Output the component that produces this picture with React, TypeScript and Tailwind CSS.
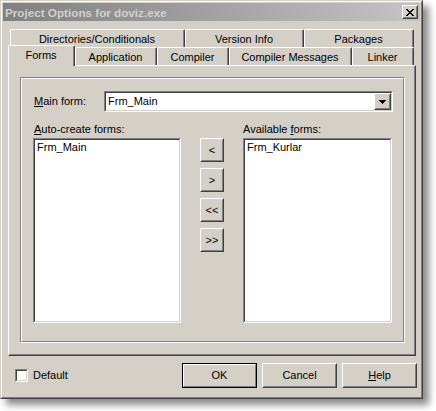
import type { ReactNode } from 'react';

const font = "font-['Liberation_Sans',Arial,sans-serif]";

function Raised({ children, className = '' }: { children?: ReactNode; className?: string }) {
  return (
    <div className={`border border-t-white border-l-white border-r-[#404040] border-b-[#404040] bg-[#d4d0c8] ${className}`}>
      <div className="h-full w-full border border-t-[#d4d0c8] border-l-[#d4d0c8] border-r-[#808080] border-b-[#808080] flex items-center justify-center">
        {children}
      </div>
    </div>
  );
}

function Sunken({ children, className = '' }: { children?: ReactNode; className?: string }) {
  return (
    <div className={`border border-t-[#808080] border-l-[#808080] border-r-white border-b-white ${className}`}>
      <div className="h-full w-full border border-t-[#404040] border-l-[#404040] border-r-[#d4d0c8] border-b-[#d4d0c8] bg-white">
        {children}
      </div>
    </div>
  );
}

function Tab({ label, w, selected = false }: { label: string; w: string; selected?: boolean }) {
  if (selected) {
    return (
      <div className={`${w} h-[21px] -mb-px relative z-10 bg-[#d4d0c8] border-t border-l border-t-white border-l-white border-r border-r-[#404040] rounded-t-[2px]`}>
        <div className="h-full border-r border-r-[#808080] flex items-center justify-center pb-px">{label}</div>
      </div>
    );
  }
  return (
    <div className={`${w} h-[18px] bg-[#d4d0c8] border-t border-l border-t-white border-l-white border-r border-r-[#404040] rounded-t-[2px]`}>
      <div className="h-full border-r border-r-[#808080] flex items-center justify-center pt-px">{label}</div>
    </div>
  );
}

function CloseGlyph() {
  const rows = ['11000011', '01100110', '00111100', '00011000', '00111100', '01100110', '11000011'];
  return (
    <svg width="8" height="7" viewBox="0 0 8 7" shapeRendering="crispEdges">
      {rows.flatMap((r, y) =>
        r.split('').map((c, x) => (c === '1' ? <rect key={`${x}-${y}`} x={x} y={y} width="1" height="1" fill="#000" /> : null))
      )}
    </svg>
  );
}

export default function App() {
  return (
    <div className={`w-[436px] h-[411px] bg-white text-[11px] leading-[13px] text-black ${font}`}>
      <div className="w-[423px] h-[399px] bg-[#d4d0c8] border border-t-[#d4d0c8] border-l-[#d4d0c8] border-r-[#404040] border-b-[#404040] shadow-[6px_6px_7px_rgba(0,0,0,0.45)]">
        <div className="h-full border border-t-white border-l-white border-r-[#808080] border-b-[#808080] p-px flex flex-col">
          {/* title bar */}
          <div className="h-[18px] flex items-center justify-between bg-gradient-to-r from-[#808080] to-[#c4c4c4] pl-[2px] pr-[2px]">
            <span className="font-bold text-[11.7px] text-[#d4d0c8]">Project Options for doviz.exe</span>
            <Raised className="w-[16px] h-[14px]">
              <CloseGlyph />
            </Raised>
          </div>

          {/* tabs */}
          <div className="mt-[8px] pl-[5px] flex flex-col">
            <div className="flex pl-[2px] h-[18px]">
              <Tab label="Directories/Conditionals" w="w-[175px]" />
              <Tab label="Version Info" w="w-[119px]" />
              <Tab label="Packages" w="w-[110px]" />
            </div>
            <div className="flex items-end h-[18px]">
              <Tab label="Forms" w="w-[67px]" selected />
              <Tab label="Application" w="w-[82px]" />
              <Tab label="Compiler" w="w-[72px]" />
              <Tab label="Compiler Messages" w="w-[123px]" />
              <Tab label="Linker" w="w-[62px]" />
            </div>

            {/* panel */}
            <div className="w-[408px] h-[291px] border-t border-l border-t-white border-l-white border-r border-b border-r-[#404040] border-b-[#404040]">
              <div className="h-full border-r border-b border-r-[#808080] border-b-[#808080] pt-[11px] pl-[11px]">
                {/* group box */}
                <div className="w-[385px] h-[266px] border border-t-[#808080] border-l-[#808080] border-r-white border-b-white">
                  <div className="h-full border border-t-white border-l-white border-r-[#808080] border-b-[#808080] flex flex-col">
                    <div className="mt-[12px] flex items-center pl-[12px]">
                      <span className="w-[70px]">
                        <span className="underline">M</span>ain form:
                      </span>
                      <Sunken className="w-[289px] h-[21px]">
                        <div className="h-full flex items-center justify-between">
                          <span className="pl-[2px]">Frm_Main</span>
                          <Raised className="w-[17px] h-full">
                            <svg width="7" height="4" viewBox="0 0 7 4" shapeRendering="crispEdges">
                              <path d="M0 0h7v1H0zM1 1h5v1H1zM2 2h3v1H2zM3 3h1v1H3z" fill="#000" />
                            </svg>
                          </Raised>
                        </div>
                      </Sunken>
                    </div>

                    <div className="mt-[11px] flex pl-[11px]">
                      <div className="w-[148px] flex flex-col">
                        <span className="h-[13px] pl-px">
                          <span className="underline">A</span>uto-create forms:
                        </span>
                        <Sunken className="mt-[2px] h-[185px]">
                          <div className="pl-[2px] pt-[1px]">Frm_Main</div>
                        </Sunken>
                      </div>

                      <div className="ml-[19px] mt-[15px] flex flex-col gap-[6px]">
                        <Raised className="w-[24px] h-[24px]">&lt;</Raised>
                        <Raised className="w-[24px] h-[24px]">&gt;</Raised>
                        <Raised className="w-[24px] h-[24px]">&lt;&lt;</Raised>
                        <Raised className="w-[24px] h-[24px]">&gt;&gt;</Raised>
                      </div>

                      <div className="ml-[19px] w-[149px] flex flex-col">
                        <span className="h-[13px]">
                          Available <span className="underline">f</span>orms:
                        </span>
                        <Sunken className="mt-[2px] h-[185px]">
                          <div className="pl-[2px] pt-[1px]">Frm_Kurlar</div>
                        </Sunken>
                      </div>
                    </div>
                  </div>
                </div>
              </div>
            </div>
          </div>

          {/* bottom row */}
          <div className="mt-[7px] flex items-center pl-[12px]">
            <Sunken className="w-[13px] h-[13px]" />
            <span className="ml-[5px]">Default</span>
            <div className="ml-auto mr-[3px] flex gap-[5px]">
              <div className="w-[75px] h-[25px] border border-black">
                <div className="h-full border border-t-white border-l-white border-r-[#808080] border-b-[#808080] flex items-center justify-center">
                  OK
                </div>
              </div>
              <Raised className="w-[75px] h-[25px]">Cancel</Raised>
              <Raised className="w-[75px] h-[25px]">
                <span>
                  <span className="underline">H</span>elp
                </span>
              </Raised>
            </div>
          </div>
        </div>
      </div>
    </div>
  );
}
